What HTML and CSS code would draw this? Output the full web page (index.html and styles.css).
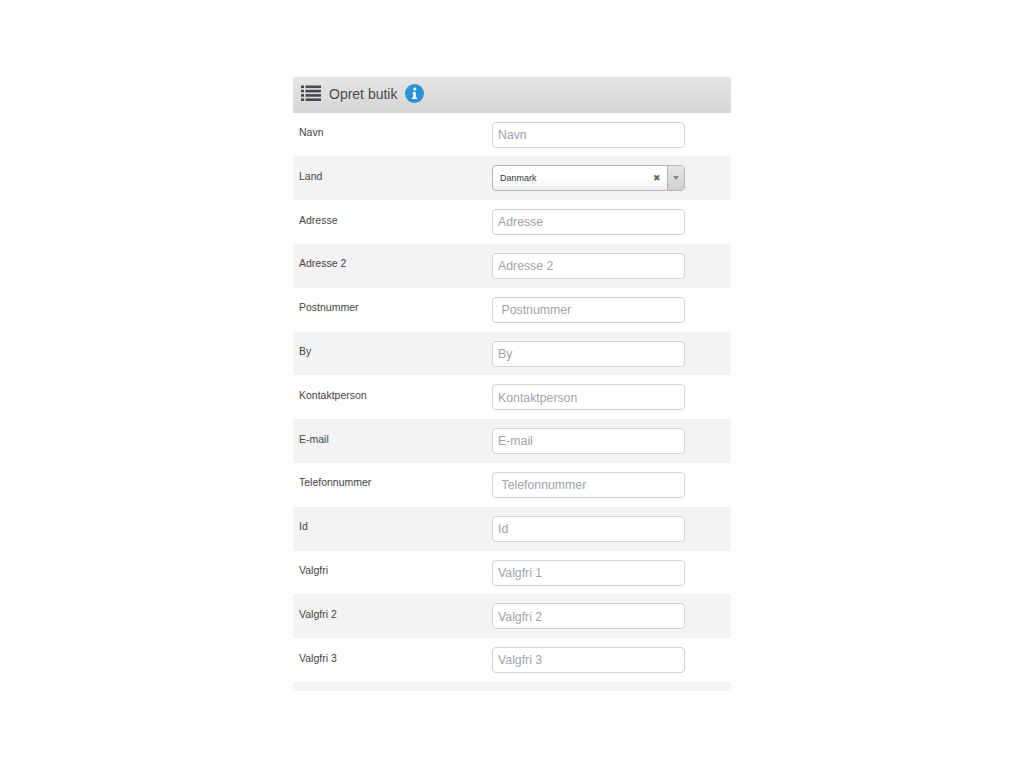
FILE: index.html
```html
<!DOCTYPE html>
<html lang="da">
<head>
<meta charset="utf-8">
<title>Opret butik</title>
<link rel="stylesheet" href="styles.css">
</head>
<body>
<main class="panel">
  <header class="panel-head">
    <svg class="list-icon" width="20" height="17" viewBox="0 0 20 17" aria-hidden="true">
      <g fill="#4a4550">
        <rect x="0" y="0.5" width="3" height="2.6"/><rect x="4.5" y="0.5" width="15.5" height="2.6"/>
        <rect x="0" y="4.8" width="3" height="2.6"/><rect x="4.5" y="4.8" width="15.5" height="2.6"/>
        <rect x="0" y="9.1" width="3" height="2.6"/><rect x="4.5" y="9.1" width="15.5" height="2.6"/>
        <rect x="0" y="13.4" width="3" height="2.6"/><rect x="4.5" y="13.4" width="15.5" height="2.6"/>
      </g>
    </svg>
    <h1 class="panel-title">Opret butik</h1>
    <svg class="info-icon" width="19" height="19" viewBox="0 0 19 19" aria-hidden="true">
      <circle cx="9.5" cy="9.5" r="9.5" fill="#2a92d6"/>
      <circle cx="9.8" cy="5" r="1.5" fill="#fff"/>
      <path d="M7.8 8h3v5.4h1.2V15H7v-1.6h1.2V9.4H7.8z" fill="#fff"/>
    </svg>
  </header>
  <div class="row"><label class="lbl">Navn</label><input class="field" placeholder="Navn"></div>
  <div class="row alt"><label class="lbl">Land</label>
    <div class="select">
      <span class="select-val">Danmark</span>
      <span class="select-x">&#10006;</span>
      <span class="select-btn"><i class="caret"></i></span>
    </div>
  </div>
  <div class="row"><label class="lbl">Adresse</label><input class="field" placeholder="Adresse"></div>
  <div class="row alt"><label class="lbl">Adresse 2</label><input class="field" placeholder="Adresse 2"></div>
  <div class="row"><label class="lbl">Postnummer</label><input class="field wide-pad" placeholder="Postnummer"></div>
  <div class="row alt"><label class="lbl">By</label><input class="field" placeholder="By"></div>
  <div class="row"><label class="lbl">Kontaktperson</label><input class="field" placeholder="Kontaktperson"></div>
  <div class="row alt"><label class="lbl">E-mail</label><input class="field" placeholder="E-mail"></div>
  <div class="row"><label class="lbl">Telefonnummer</label><input class="field wide-pad" placeholder="Telefonnummer"></div>
  <div class="row alt"><label class="lbl">Id</label><input class="field" placeholder="Id"></div>
  <div class="row"><label class="lbl">Valgfri</label><input class="field" placeholder="Valgfri 1"></div>
  <div class="row alt"><label class="lbl">Valgfri 2</label><input class="field" placeholder="Valgfri 2"></div>
  <div class="row"><label class="lbl">Valgfri 3</label><input class="field" placeholder="Valgfri 3"></div>
  <div class="panel-foot"></div>
</main>
</body>
</html>
```
FILE: styles.css
```css
* { box-sizing: border-box; }
html, body { margin: 0; background: #fff; }
body { font-family: "Liberation Sans", Arial, sans-serif; color: #444; padding: 77px 293px 0; }
.panel { width: 438px; }
.panel-head {
  height: 35.6px;
  display: flex;
  align-items: center;
  padding: 0 0 2px 8px;
  background:
    repeating-conic-gradient(rgba(255, 255, 255, 0.14) 0 25%, transparent 0 50%) 0 0 / 2px 2px,
    linear-gradient(#e3e3e1, #d1d1d1);
}
.list-icon { flex: none; }
.panel-title {
  margin: 0 0 0 8px;
  font-size: 14px;
  font-weight: 400;
  color: #4d4855;
}
.info-icon { flex: none; margin-left: 8px; }
.row {
  height: 43.8px;
  display: flex;
  align-items: flex-start;
  padding: 9px 0 0 6px;
  background: #fff;
}
.row.alt { background: #f3f3f3; }
.lbl {
  width: 193px;
  flex: none;
  font-size: 10.5px;
  line-height: 12px;
  padding-top: 4.5px;
  color: #444;
}
.field {
  width: 192.6px;
  height: 26px;
  flex: none;
  padding: 0.6px 5px 0;
  border: 1px solid #d2d2d2;
  border-radius: 4px;
  background: #fff;
  font-family: inherit;
  font-size: 12.3px;
  color: #444;
  outline: none;
}
.field::placeholder { color: #a2a2a8; opacity: 1; }
.field.wide-pad { padding-left: 8.5px; }
.select {
  width: 192.6px;
  height: 26px;
  flex: none;
  display: flex;
  align-items: center;
  border: 1px solid #b4b4b4;
  border-radius: 4px;
  background: linear-gradient(#fff 55%, #ececec);
  padding-left: 7px;
}
.select-val { flex: 1; font-size: 9px; color: #333; }
.select-x { font-size: 9px; color: #666; margin-right: 6px; }
.select-btn {
  width: 17px;
  align-self: stretch;
  display: flex;
  align-items: center;
  justify-content: center;
  border-left: 1px solid #b4b4b4;
  background: linear-gradient(#e6e6e6, #cfcfcf);
  border-radius: 0 3px 3px 0;
}
.caret {
  width: 0;
  height: 0;
  border-left: 3px solid transparent;
  border-right: 3px solid transparent;
  border-top: 4px solid #888;
}
.panel-foot { height: 9px; background: #f3f3f3; }
```
